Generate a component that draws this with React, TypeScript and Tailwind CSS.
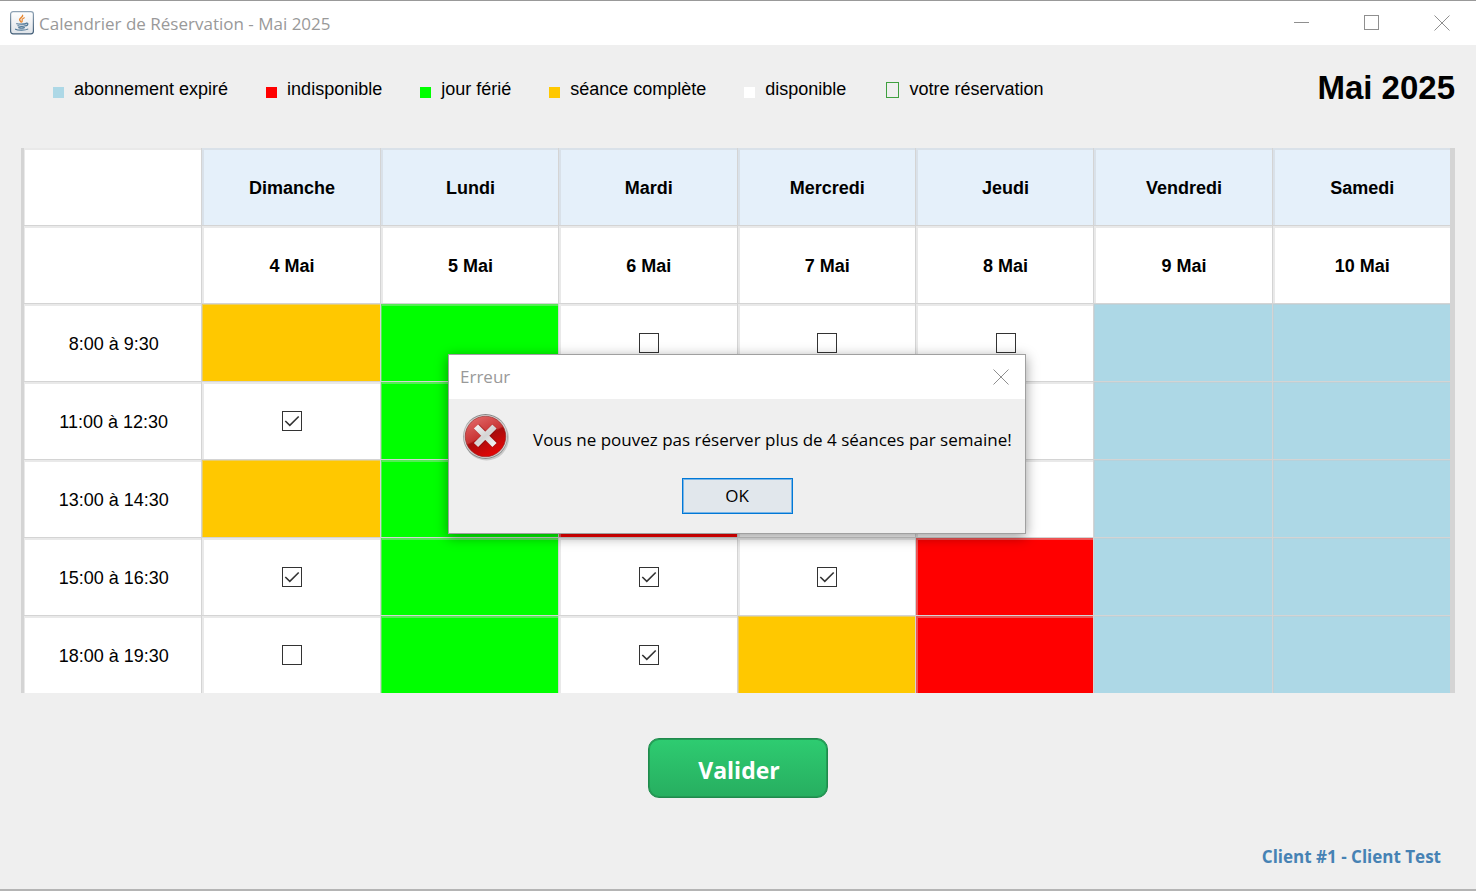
import { useState } from 'react';

type Status = 'full' | 'holiday' | 'unavailable' | 'expired' | 'free' | 'booked';

const cellColor: Record<Status, string> = {
  full: 'bg-[#ffc800] shadow-[inset_1px_1px_0_rgba(210,210,210,0.5)]',
  holiday: 'bg-[#00ff00] shadow-[inset_1px_2px_0_rgba(210,210,210,0.4)]',
  unavailable: 'bg-[#ff0000] shadow-[inset_2px_2px_0_rgba(210,210,210,0.4)]',
  expired: 'bg-[#add8e6] shadow-[inset_1px_1px_0_rgba(200,200,200,0.4)]',
  free: 'bg-white shadow-[inset_2px_2px_0_#e9e9e9]',
  booked: 'bg-white shadow-[inset_2px_2px_0_#e9e9e9]',
};

const days = [
  ['Dimanche', '4 Mai'],
  ['Lundi', '5 Mai'],
  ['Mardi', '6 Mai'],
  ['Mercredi', '7 Mai'],
  ['Jeudi', '8 Mai'],
  ['Vendredi', '9 Mai'],
  ['Samedi', '10 Mai'],
];

const slots: { time: string; cells: Status[] }[] = [
  { time: '8:00 à 9:30', cells: ['full', 'holiday', 'free', 'free', 'free', 'expired', 'expired'] },
  { time: '11:00 à 12:30', cells: ['booked', 'holiday', 'free', 'free', 'free', 'expired', 'expired'] },
  { time: '13:00 à 14:30', cells: ['full', 'holiday', 'unavailable', 'free', 'free', 'expired', 'expired'] },
  { time: '15:00 à 16:30', cells: ['booked', 'holiday', 'booked', 'booked', 'unavailable', 'expired', 'expired'] },
  { time: '18:00 à 19:30', cells: ['free', 'holiday', 'booked', 'full', 'unavailable', 'expired', 'expired'] },
];

const legend = [
  { label: 'abonnement expiré', swatch: 'bg-[#add8e6]' },
  { label: 'indisponible', swatch: 'bg-[#ff0000]' },
  { label: 'jour férié', swatch: 'bg-[#00ff00]' },
  { label: 'séance complète', swatch: 'bg-[#ffc800]' },
  { label: 'disponible', swatch: 'bg-white' },
];

function JavaIcon() {
  return (
    <svg width="24" height="24" viewBox="0 0 24 24" aria-hidden="true">
      <defs>
        <linearGradient id="java-bg" x1="0" y1="0" x2="0" y2="1">
          <stop offset="0" stopColor="#ffffff" />
          <stop offset="1" stopColor="#dfe3e8" />
        </linearGradient>
        <linearGradient id="java-edge" x1="0" y1="0" x2="0" y2="1">
          <stop offset="0" stopColor="#8fa3b5" />
          <stop offset="1" stopColor="#3f5b75" />
        </linearGradient>
      </defs>
      <rect x="0.6" y="0.6" width="22.8" height="22.2" rx="2.5" fill="url(#java-bg)" stroke="url(#java-edge)" strokeWidth="1.2" />
      <g fill="none" strokeLinecap="round">
        <path d="M12.6 4.300c.8 1.800-3.200 2.600-3 4.500.1 1 1.100 1.500 1.600 2.300" stroke="#e8862e" strokeWidth="1.4" />
        <path d="M14.300 6.800c-1.700.8-2.600 1.300-2.300 2.300.3.700.6 1-.1 1.800" stroke="#e8862e" strokeWidth="1.2" />
        <path d="M6.800 12.700c1.500.6 7.500.6 9.300-.1" stroke="#4f7796" strokeWidth="1.200" />
        <path d="M8 14.700c2 .7 5.500.7 7.200 0M8.700 16.600c1.800.6 4 .6 5.700 0" stroke="#4f7796" strokeWidth="1.200" />
        <path d="M16.200 12.200c2.300-.4 2.200 1.900-.4 2.700" stroke="#4f7796" strokeWidth="1.200" />
        <path d="M5.500 18.200c2 1.300 10.200 1.200 12.300-.1" stroke="#4f7796" strokeWidth="1.100" />
      </g>
    </svg>
  );
}

function CloseIcon() {
  return (
    <svg width="16" height="16" viewBox="0 0 16 16" fill="none" stroke="#8f8f8f" aria-hidden="true">
      <path d="M0.500 0.500 15.500 15.500M15.500 0.500 0.500 15.500" />
    </svg>
  );
}

function ErrorIcon() {
  return (
    <svg width="48" height="48" viewBox="0 0 48 48" aria-hidden="true">
      <defs>
        <linearGradient id="err-ring" x1="0" y1="0" x2="0" y2="1">
          <stop offset="0" stopColor="#858585" />
          <stop offset="0.300" stopColor="#b8b8b8" />
          <stop offset="1" stopColor="#8a8a8a" />
        </linearGradient>
        <linearGradient id="err-top" x1="0.200" y1="0" x2="0.700" y2="1">
          <stop offset="0" stopColor="#e26a6a" />
          <stop offset="0.480" stopColor="#c93434" />
          <stop offset="0.520" stopColor="#a80d0d" />
          <stop offset="1" stopColor="#e80505" />
        </linearGradient>
        <linearGradient id="err-x" gradientUnits="userSpaceOnUse" x1="14" y1="12" x2="32" y2="34">
          <stop offset="0" stopColor="#f4f4f4" />
          <stop offset="0.500" stopColor="#d4d4d4" />
          <stop offset="1" stopColor="#f4f4f4" />
        </linearGradient>
      </defs>
      <circle cx="24.500" cy="25" r="22.500" fill="#000000" opacity="0.150" />
      <circle cx="23.500" cy="23.500" r="22.500" fill="url(#err-ring)" />
      <circle cx="23.500" cy="23.500" r="21.500" fill="#dedede" />
      <circle cx="23.500" cy="23.500" r="20.300" fill="url(#err-top)" stroke="#8c2020" strokeWidth="0.600" />
      <path d="M14.500 13.500 33 32M33 13.500 14.500 32" stroke="#7c0c0c" strokeOpacity="0.500" strokeWidth="7" />
      <path d="M14 13.500 32.500 32M32.500 13.500 14 32" stroke="url(#err-x)" strokeWidth="6" />
    </svg>
  );
}

function SlotBox({ label, initial }: { label: string; initial: boolean }) {
  const [checked, setChecked] = useState(initial);
  return (
    <label className="mx-auto grid size-5">
      <input
        type="checkbox"
        aria-label={label}
        checked={checked}
        onChange={(e) => setChecked(e.target.checked)}
        className="col-start-1 row-start-1 size-5 appearance-none border border-[#333333] bg-white"
      />
      {checked && (
        <svg className="pointer-events-none col-start-1 row-start-1" width="20" height="20" viewBox="0 0 20 20" fill="none" stroke="#333333" strokeWidth="1.600" aria-hidden="true">
          <path d="M3.300 10 7.800 14.300 16.700 5.500" />
        </svg>
      )}
    </label>
  );
}

export default function App() {
  const [open, setOpen] = useState(true);
  const head = 'h-[78px] border-r border-b border-[#d4d4d4] p-0 pt-[3px] pl-[2px] text-lg font-bold';
  return (
    <div className="relative flex min-h-screen flex-col border-t border-b-2 border-t-[#999999] border-b-[#b4b4b4] bg-[#efefef] font-['Liberation_Sans',Arial,sans-serif] text-black">
      <header className="flex h-11 items-center justify-between bg-white pr-[26px] pl-[10px]">
        <div className="flex items-center gap-[5px] font-['Open_Sans','Noto_Sans',sans-serif] text-[17px] text-[#999999]">
          <JavaIcon />
          <span className="pt-px">Calendrier de Réservation - Mai 2025</span>
        </div>
        <div className="flex items-center gap-[54px]">
          <button type="button" aria-label="Réduire">
            <svg width="16" height="16" viewBox="0 0 16 16" stroke="#8f8f8f" aria-hidden="true"><path d="M0 7.500H15" /></svg>
          </button>
          <button type="button" aria-label="Agrandir">
            <svg width="16" height="16" viewBox="0 0 16 16" fill="none" stroke="#8f8f8f" aria-hidden="true"><rect x="0.500" y="0.500" width="14" height="14" /></svg>
          </button>
          <button type="button" aria-label="Fermer"><CloseIcon /></button>
        </div>
      </header>

      <main className="flex flex-1 flex-col px-[21px]">
        <div className="flex h-[103px] items-start justify-between pt-[22px] pl-8">
          <ul className="flex h-11 items-center gap-[38px] text-lg">
            {legend.map((item) => (
              <li key={item.label} className="flex items-center gap-[10px]">
                <span className={`mt-[7px] size-[11px] ${item.swatch}`} />
                {item.label}
              </li>
            ))}
            <li className="flex items-center gap-[10px]">
              <span className="mt-[2px] ml-[2px] h-4 w-[13px] border border-[#3fa03f]" />
              votre réservation
            </li>
          </ul>
          <h1 className="text-[33px] leading-[42px] font-bold">Mai 2025</h1>
        </div>

        <div className="border-r-4 border-l-[3px] border-[#d4d4d4]">
          <table className="w-full table-fixed border-separate border-spacing-0 text-center text-lg">
            <thead>
              <tr>
                <td className={`${head} bg-white shadow-[inset_1px_2px_0_#e9e9e9]`} />
                {days.map(([name]) => (
                  <th key={name} scope="col" className={`${head} bg-[#e5f0fa] shadow-[inset_2px_2px_0_#d9e1e9]`}>{name}</th>
                ))}
              </tr>
              <tr>
                <td className={`${head} bg-white shadow-[inset_1px_2px_0_#e9e9e9]`} />
                {days.map(([name, date]) => (
                  <th key={name} scope="col" className={`${head} bg-white shadow-[inset_2px_2px_0_#e9e9e9]`}>{date}</th>
                ))}
              </tr>
            </thead>
            <tbody>
              {slots.map((slot, r) => {
                const edge = r === slots.length - 1 ? 'h-[77px] border-r border-[#d4d4d4] p-0 pl-[2px]' : 'h-[78px] border-r border-b border-[#d4d4d4] p-0 pl-[2px]';
                return (
                  <tr key={slot.time}>
                    <th scope="row" className={`${edge} bg-white pt-[3px] font-normal shadow-[inset_1px_2px_0_#e9e9e9]`}>{slot.time}</th>
                    {slot.cells.map((status, c) => (
                      <td key={days[c][0]} className={`${edge} ${cellColor[status]}`}>
                        {(status === 'free' || status === 'booked') && (
                          <SlotBox label={`${days[c][0]} ${days[c][1]}, ${slot.time}`} initial={status === 'booked'} />
                        )}
                      </td>
                    ))}
                  </tr>
                );
              })}
            </tbody>
          </table>
        </div>

        <div className="flex justify-center pt-[45px]">
          <button
            type="button"
            onClick={() => setOpen(true)}
            className="h-[60px] w-[180px] rounded-[11px] border border-[#1f8a4c] bg-linear-to-b from-[#2ecc71] to-[#27ae60] pt-1 pl-[2px] font-['Open_Sans','Noto_Sans',sans-serif] text-[23px] font-bold text-white shadow-[inset_0_0_0_1px_#249a55]"
          >
            Valider
          </button>
        </div>
      </main>

      <footer className="pr-[35px] pb-5 text-right font-['Open_Sans','Noto_Sans',sans-serif] text-[17px] leading-6 font-bold text-[#4682b4]">
        Client #1 - Client Test
      </footer>

      {open && (
        <div className="absolute inset-0 flex items-center justify-center pr-[2px] pb-[3px]">
          <section
            role="alertdialog"
            aria-labelledby="dialog-title"
            aria-describedby="dialog-text"
            className="w-[578px] border border-[#a0a0a0] bg-[#efefef] font-['Open_Sans','Noto_Sans',sans-serif] text-[17px] shadow-[0_3px_12px_rgba(0,0,0,0.4)]"
          >
            <div className="flex h-11 items-center justify-between bg-white pr-4 pl-[11px]">
              <h2 id="dialog-title" className="pt-px text-[#999999]">Erreur</h2>
              <button type="button" aria-label="Fermer le message" onClick={() => setOpen(false)}><CloseIcon /></button>
            </div>
            <div className="flex items-center gap-[23px] pt-[14px] pl-[13px]">
              <ErrorIcon />
              <p id="dialog-text" className="pt-[6px] whitespace-nowrap">Vous ne pouvez pas réserver plus de 4 séances par semaine!</p>
            </div>
            <div className="flex justify-center pt-[17px] pb-[19px]">
              <button
                type="button"
                onClick={() => setOpen(false)}
                className="h-9 w-[111px] border border-[#0078d7] bg-[#e1e7ec] pt-px shadow-[inset_0_0_0_1px_#7ab5e6]"
              >
                OK
              </button>
            </div>
          </section>
        </div>
      )}
    </div>
  );
}
